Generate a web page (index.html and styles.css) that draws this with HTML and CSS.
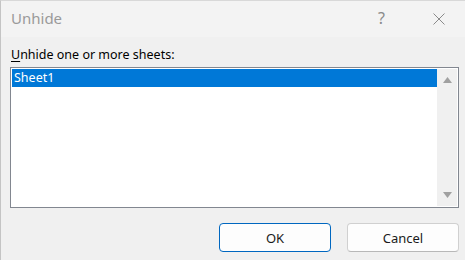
FILE: index.html
```html
<!DOCTYPE html>
<html>
<head>
<meta charset="utf-8">
<link rel="stylesheet" href="styles.css">
</head>
<body>
<div class="window">
  <div class="titlebar">
    <span class="title">Unhide</span>
    <div class="controls">
      <span class="help">?</span>
      <svg class="close" width="12" height="12" viewBox="0 0 12 12"><path d="M0.5 0.5 L11.5 11.5 M11.5 0.5 L0.5 11.5" stroke="#8a8a8a" stroke-width="1" fill="none"/></svg>
    </div>
  </div>
  <div class="content">
    <div class="label"><u>U</u>nhide one or more sheets:</div>
    <div class="listbox">
      <div class="items">
        <div class="item selected">Sheet1</div>
      </div>
      <div class="scrollbar">
        <svg width="9" height="6" viewBox="0 0 9 6"><path d="M4.5 0 L9 6 L0 6 Z" fill="#a0a0a0"/></svg>
        <svg width="9" height="6" viewBox="0 0 9 6"><path d="M0 0 L9 0 L4.5 6 Z" fill="#a0a0a0"/></svg>
      </div>
    </div>
    <div class="buttons">
      <button class="btn primary">OK</button>
      <button class="btn">Cancel</button>
    </div>
  </div>
</div>
</body>
</html>
```
FILE: styles.css
```css
html, body {
  margin: 0;
  padding: 0;
  width: 465px;
  height: 260px;
  overflow: hidden;
  background: #f0f0f0;
}
.window {
  width: 465px;
  height: 268px;
  box-sizing: border-box;
  border-left: 1px solid #c4c4c4;
  border-top: 1px solid #d8d8d8;
  border-bottom-left-radius: 8px;
  background: #f0f0f0;
  font-family: "Noto Sans", "Open Sans", sans-serif;
  color: #000;
}
.titlebar {
  height: 36px;
  background: #f3f3f3;
  display: flex;
  align-items: center;
  justify-content: space-between;
  padding-left: 10px;
}
.title {
  font-size: 15px;
  color: #9a9a9a;
  margin-top: -2px;
}
.controls {
  display: flex;
  align-items: center;
}
.help {
  font-size: 16px;
  color: #8a8a8a;
  margin-right: 48px;
  margin-top: -2px;
}
.close {
  margin-right: 20px;
  margin-top: -1px;
}
.content {
  padding: 10px 6px 0 9px;
}
.label {
  font-size: 12.5px;
  line-height: 16px;
  margin-bottom: 4px;
  margin-left: 1px;
}
.label u {
  text-underline-offset: 2px;
}
.listbox {
  width: 449px;
  height: 141px;
  box-sizing: border-box;
  border: 1px solid #828790;
  background: #fff;
  display: flex;
  padding: 1px;
}
.items {
  flex: 1;
}
.item {
  height: 18px;
  font-size: 12.5px;
  line-height: 18px;
  padding-left: 2px;
}
.item.selected {
  background: #0078d7;
  color: #fff;
}
.scrollbar {
  width: 20px;
  background: #f0f0f0;
  display: flex;
  flex-direction: column;
  align-items: center;
  justify-content: space-between;
  padding: 8px 0 8px;
  box-sizing: border-box;
}
.buttons {
  display: flex;
  justify-content: flex-end;
  gap: 16px;
  margin-top: 15px;
  padding-right: 0;
}
.btn {
  width: 112px;
  height: 29px;
  box-sizing: border-box;
  border: 1px solid #d0d0d0;
  border-bottom-color: #b8b8b8;
  border-radius: 4px;
  background: #fdfdfd;
  font-family: "Noto Sans", "Open Sans", sans-serif;
  font-size: 13px;
  color: #1a1a1a;
  padding: 0;
}
.btn.primary {
  border: 1px solid #0067c0;
}
```
